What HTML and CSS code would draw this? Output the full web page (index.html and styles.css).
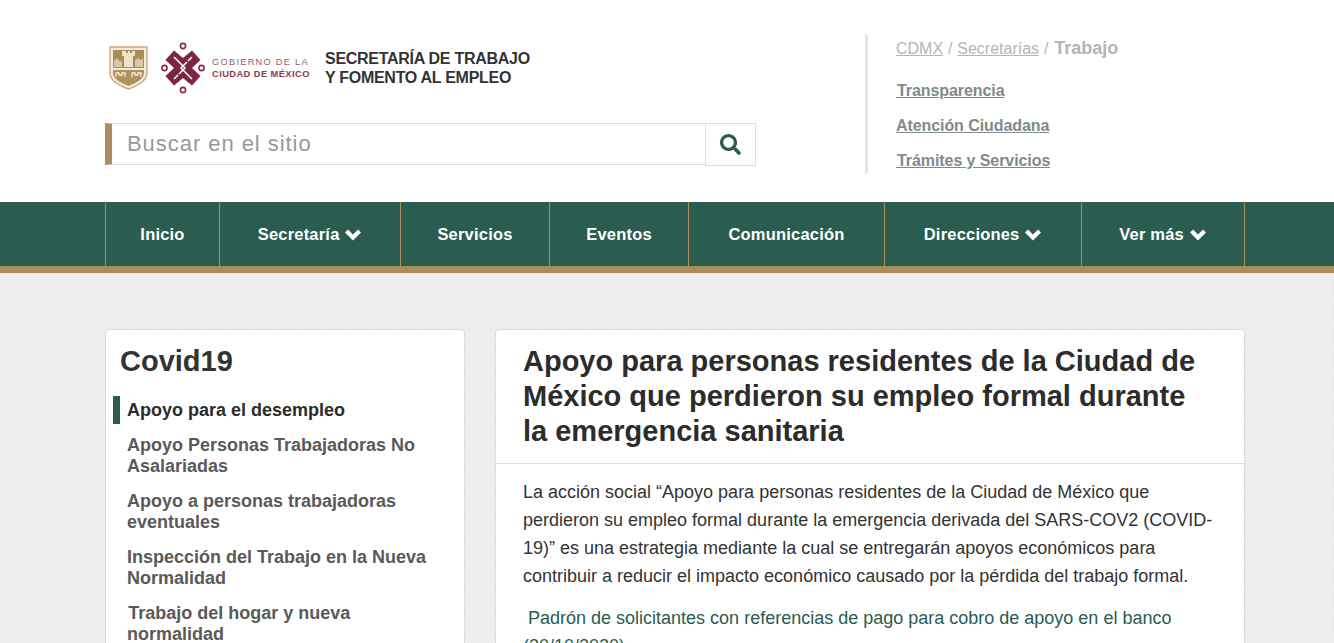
FILE: index.html
```html
<!DOCTYPE html>
<html lang="es">
<head>
<meta charset="utf-8">
<title>Secretaría de Trabajo y Fomento al Empleo</title>
<link rel="stylesheet" href="styles.css">
</head>
<body>
<header class="site-header">
  <div class="wrap header-row">
    <div class="header-left">
      <div class="logo">
        <svg class="shield" viewBox="0 0 39 44" width="39" height="44" aria-hidden="true">
          <path d="M1 1H38V27C38 35 28 40 19.500 43C11 40 1 35 1 27Z" fill="#f3ecdd" stroke="#c4ab80" stroke-width="1.400"/>
          <path d="M4 4H35V22H4Z" fill="#a98a5b"/>
          <path d="M15 21V10H13V5H17V7H19V5H21V7H23V5H26V10H24V21Z" fill="#ece2cf"/>
          <path d="M5 21V15L8 12L11 16L13 14V21ZM26 21V14L29 12L32 14L34 12V21Z" fill="#d9c7a6"/>
          <path d="M4 24H35V27C35 33 27 37 19.500 40C12 37 4 33 4 27Z" fill="#b0925f"/>
          <path d="M7 31V27H10V29H13V27H16V31M23 31V27H26V29H29V27H32V31" fill="none" stroke="#f3ecdd" stroke-width="1.300"/>
        </svg>
        <svg class="knot" viewBox="0 0 44 52" width="44" height="52" aria-hidden="true">
          <g fill="none" stroke="#8a2c47" stroke-width="1.600">
            <circle cx="22" cy="4" r="2.600"/><circle cx="22" cy="48" r="2.600"/><circle cx="3.500" cy="26" r="2.600"/><circle cx="40.500" cy="26" r="2.600"/>
          </g>
          <path d="M13 8.500L22 16L31 8.500L39.500 18L31 26L39.500 34L31 43.500L22 36L13 43.500L4.500 34L13 26L4.500 18Z" fill="#7c2540"/>
          <g fill="none" stroke="#fff" stroke-width="1.500">
            <path d="M13 15L24 26L18 32"/>
            <path d="M31 37L20 26L26 20"/>
            <path d="M31 15L27 19M13 37L17 33"/>
          </g>
        </svg>
        <div class="gov"><span class="gov-top">GOBIERNO DE LA</span><span class="gov-bottom">CIUDAD DE MÉXICO</span></div>
        <div class="sec">SECRETARÍA DE TRABAJO<br>Y FOMENTO AL EMPLEO</div>
      </div>
      <form class="search">
        <input class="search-input" type="text" placeholder="Buscar en el sitio">
        <button class="search-btn" type="button" aria-label="Buscar">
          <svg viewBox="0 0 512 512" width="21" height="21"><path fill="#2a5c4f" d="M505 442.700L405.300 343c-4.500-4.500-10.600-7-17-7H372c27.600-35.300 44-79.700 44-128C416 93.100 322.900 0 208 0S0 93.100 0 208s93.100 208 208 208c48.300 0 92.700-16.400 128-44v16.300c0 6.400 2.500 12.500 7 17l99.700 99.700c9.400 9.400 24.600 9.400 33.900 0l28.300-28.300c9.400-9.400 9.400-24.600.1-34zM208 336c-70.700 0-128-57.200-128-128 0-70.700 57.200-128 128-128 70.700 0 128 57.200 128 128 0 70.700-57.200 128-128 128z"/></svg>
        </button>
      </form>
    </div>
    <div class="header-right">
      <div class="crumbs"><a href="#">CDMX</a> / <a href="#">Secretarías</a> / <b>Trabajo</b></div>
      <a class="quick" href="#"><span class="tiny">&nbsp;</span>Transparencia</a>
      <a class="quick" href="#">Atención Ciudadana</a>
      <a class="quick" href="#"><span class="tiny">&nbsp;</span>Trámites y Servicios</a>
    </div>
  </div>
</header>

<nav class="main-nav">
  <ul class="wrap nav-list">
    <li><a href="#">Inicio</a></li>
    <li><a href="#">Secretaría <svg class="chev" viewBox="0 0 18 13" width="18" height="13"><path d="M2.500 3L9 9.500L15.500 3" fill="none" stroke="#fff" stroke-width="4.200"/></svg></a></li>
    <li><a href="#">Servicios</a></li>
    <li><a href="#">Eventos</a></li>
    <li><a href="#">Comunicación</a></li>
    <li><a href="#">Direcciones <svg class="chev" viewBox="0 0 18 13" width="18" height="13"><path d="M2.500 3L9 9.500L15.500 3" fill="none" stroke="#fff" stroke-width="4.200"/></svg></a></li>
    <li><a href="#">Ver más <svg class="chev" viewBox="0 0 18 13" width="18" height="13"><path d="M2.500 3L9 9.500L15.500 3" fill="none" stroke="#fff" stroke-width="4.200"/></svg></a></li>
  </ul>
</nav>

<main class="wrap content">
  <aside class="card side">
    <h2 class="side-title">Covid19</h2>
    <ul class="side-list">
      <li class="active"><a href="#">Apoyo para el desempleo</a></li>
      <li><a href="#">Apoyo Personas Trabajadoras No Asalariadas</a></li>
      <li><a href="#">Apoyo a personas trabajadoras eventuales</a></li>
      <li><a href="#">Inspección del Trabajo en la Nueva Normalidad</a></li>
      <li><a href="#"><span class="tiny">&nbsp;</span>Trabajo del hogar y nueva normalidad</a></li>
    </ul>
  </aside>
  <article class="card article">
    <h1 class="article-title">Apoyo para personas residentes de la Ciudad de México que perdieron su empleo formal durante la emergencia sanitaria</h1>
    <div class="article-body">
      <p>La acción social “Apoyo para personas residentes de la Ciudad de México que perdieron su empleo formal durante la emergencia derivada del SARS-COV2 (COVID-19)” es una estrategia mediante la cual se entregarán apoyos económicos para contribuir a reducir el impacto económico causado por la pérdida del trabajo formal.</p>
      <p><a class="doc" href="#">&nbsp;Padrón de solicitantes con referencias de pago para cobro de apoyo en el banco (30/10/2020)</a></p>
    </div>
  </article>
</main>
</body>
</html>
```
FILE: styles.css
```css
* { box-sizing: border-box; }
html, body { margin: 0; height: 643px; overflow: hidden; }
body {
  font-family: "Liberation Sans", Arial, sans-serif;
  color: #2c2c2c;
  background-color: #eeeeee;
  background-image: radial-gradient(#e6e6e6 0.7px, transparent 0.8px);
  background-size: 3px 3px;
}
a { color: inherit; }
.wrap { width: 1140px; margin: 0 0 0 105px; }
.tiny { font-size: 4px; line-height: 0; }

.site-header { background: #fff; height: 202px; }
.header-row { display: flex; height: 202px; }
.header-left { width: 651px; padding-top: 40px; }
.logo { display: flex; align-items: center; height: 55px; padding-left: 4px; }
.shield { margin-right: 13px; flex: none; }
.knot { margin-right: 7px; flex: none; }
.gov {
  display: flex; flex-direction: column;
  width: 100px; margin-right: 13px;
  font-size: 9.300px; line-height: 12px; color: #9c5a6e; letter-spacing: 1.240px; white-space: nowrap;
}
.gov-bottom { font-weight: bold; color: #8a3a53; letter-spacing: .43px; }
.sec { font-size: 16px; line-height: 19px; padding-top: 1px; font-weight: bold; color: #333; letter-spacing: -.28px; white-space: nowrap; }

.search { display: flex; margin-top: 28px; height: 43px; }
.search-input {
  flex: 1; min-width: 0; height: 42px;
  border: 1px solid #ddd; border-left: 7px solid #ab8c5b; border-right: 0;
  padding: 0 15px; outline: 0;
  font: 22px "Liberation Sans", Arial, sans-serif; letter-spacing: .95px; color: #999;
  background: #fff;
}
.search-input::placeholder { color: #999; opacity: 1; }
.search-btn {
  width: 51px; height: 43px; padding: 0; background: #fff;
  border: 1px solid #ddd; display: flex; align-items: center; justify-content: center;
}

.header-right {
  margin: 34px 0 0 109px; height: 140px; width: 300px;
  border-left: 3px solid #e6e6e6; padding: 4px 0 0 28px;
  display: flex; flex-direction: column; align-items: flex-start;
}
.crumbs { font-size: 16px; line-height: 20px; color: #b5b5b5; white-space: nowrap; word-spacing: .4px; }
.crumbs b { font-size: 18px; margin-left: 1px; }
.quick { font-size: 16px; font-weight: bold; line-height: 20px; color: #7f8a8a; margin-top: 15px; white-space: nowrap; letter-spacing: -.08px; }
.crumbs + .quick { margin-top: 22px; }

.main-nav { background: #2a5c4f; height: 71px; border-bottom: 7px solid #ab8c5b; }
.nav-list {
  display: grid; grid-template-columns: 114px 181px 149px 139px 196px 197px 163px;
  list-style: none; padding: 0; height: 64px; border-right: 1px solid #ab8c5b;
}
.nav-list li { border-left: 1px solid #ab8c5b; text-align: center; }
.nav-list a {
  display: block; height: 64px; line-height: 64px; color: #fff; font-weight: bold; font-size: 16.500px;
  letter-spacing: .2px; text-decoration: none; white-space: nowrap;
}
.chev { vertical-align: -1px; }

.content { display: flex; gap: 30px; padding-top: 56px; align-items: flex-start; }
.card { background: #fff; border: 1px solid #ddd; border-radius: 4px; }
.side { width: 360px; flex: none; padding: 0 7px 20px; height: 400px; }
.side-title { font-size: 29px; line-height: 34px; font-weight: bold; color: #333; margin: 14px 0 18px 7px; }
.side-list { list-style: none; margin: 0; padding: 0 30px 0 0; }
.side-list li { font-size: 18px; line-height: 21px; font-weight: bold; color: #5a5a5a; padding: 4px 0 10px 14px; }
.side-list a { text-decoration: none; display: block; }
.side-list .active { color: #2c2c2c; border-left: 7px solid #2a5c4f; padding: 4px 0 3px 7px; margin-bottom: 7px; }
.article { flex: 1; height: 400px; }
.article-title {
  font-size: 29px; line-height: 35px; font-weight: bold; color: #2c2c2c;
  margin: 0; padding: 14px 27px 14px; border-bottom: 1px solid #ddd;
}
.article-body { padding: 14px 27px 0; font-size: 18px; line-height: 28px; color: #333; }
.article-body p { margin: 0 0 14px; }
.doc { color: #2a5c4f; text-decoration: none; }
```
